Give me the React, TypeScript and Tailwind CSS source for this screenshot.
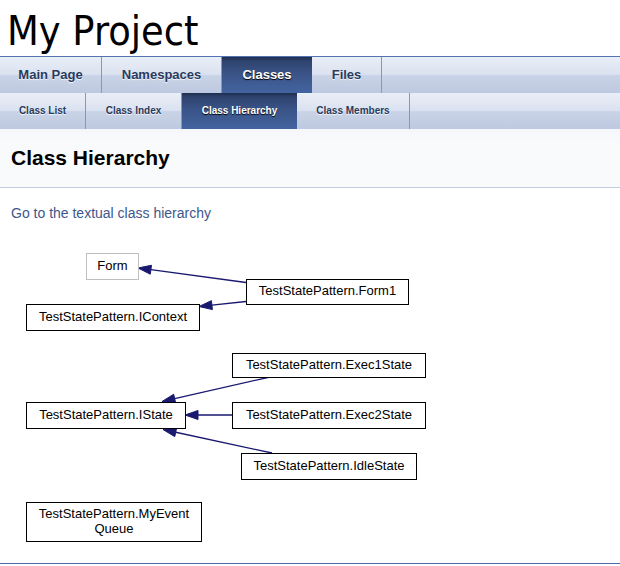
import React from "react";

const tabBg =
  "bg-[linear-gradient(to_bottom,#e9eef7_0%,#dbe2f0_48%,#c9d3e7_52%,#bdc9e1_100%)]";
const activeBg =
  "bg-[linear-gradient(to_bottom,#1f2e4f_0%,#2f446f_12%,#3a5387_45%,#4364a0_100%)]";

const mainTabs = [
  { label: "Main Page", w: "w-[102px]" },
  { label: "Namespaces", w: "w-[120px]" },
  { label: "Classes", w: "w-[90px]", active: true },
  { label: "Files", w: "w-[70px]" },
];

const subTabs = [
  { label: "Class List", w: "w-[86px]" },
  { label: "Class Index", w: "w-[96px]" },
  { label: "Class Hierarchy", w: "w-[115px]", active: true },
  { label: "Class Members", w: "w-[113px]" },
];

type Tab = { label: string; w: string; active?: boolean };

function TabRow({ tabs, small }: { tabs: Tab[]; small?: boolean }) {
  return (
    <ul className={`flex h-[36px] ${tabBg} ${small ? "text-[10px]" : "text-[13px]"}`}>
      {tabs.map((t) => (
        <li
          key={t.label}
          className={`${t.w} h-full text-center font-bold leading-[36px] ${
            t.active
              ? `${activeBg} text-white [text-shadow:0_1px_1px_rgba(0,0,0,1)]`
              : "border-r border-[#8397c6] text-[#283a5d] [text-shadow:0_1px_1px_rgba(255,255,255,0.9)]"
          }`}
        >
          {t.label}
        </li>
      ))}
    </ul>
  );
}

// graph nodes, coordinates inside the diagram canvas
const nodes = [
  { label: "Form", x: 86, y: 13, w: 53, h: 27, gray: true },
  { label: "TestStatePattern.Form1", x: 246, y: 39, w: 163, h: 26 },
  { label: "TestStatePattern.IContext", x: 26, y: 64, w: 174, h: 27 },
  { label: "TestStatePattern.Exec1State", x: 232, y: 113, w: 194, h: 25 },
  { label: "TestStatePattern.IState", x: 26, y: 162, w: 160, h: 27 },
  { label: "TestStatePattern.Exec2State", x: 232, y: 162, w: 194, h: 27 },
  { label: "TestStatePattern.IdleState", x: 241, y: 213, w: 176, h: 27 },
];

const edges: [number, number, number, number][] = [
  [246, 42.5, 138, 28],
  [246, 61.5, 199, 66.5],
  [270, 137, 162, 161.5],
  [232, 175, 185, 175],
  [272, 213, 163, 189.5],
];

function Edge({ e }: { e: [number, number, number, number] }) {
  const [x1, y1, x2, y2] = e;
  const dx = x2 - x1;
  const dy = y2 - y1;
  const len = Math.hypot(dx, dy);
  const ux = dx / len;
  const uy = dy / len;
  const L = 13;
  const W = 4.5;
  const bx = x2 - ux * L;
  const by = y2 - uy * L;
  const pts = `${x2},${y2} ${bx - uy * W},${by + ux * W} ${bx + uy * W},${by - ux * W}`;
  return (
    <g>
      <line x1={x1} y1={y1} x2={bx} y2={by} stroke="#191970" strokeWidth={1.3} />
      <polygon points={pts} fill="#191970" stroke="#191970" strokeWidth={1} />
    </g>
  );
}

export default function App() {
  return (
    <div className="min-h-screen bg-white font-['Liberation_Sans',Arial,sans-serif]">
      {/* title area */}
      <div className="h-[57px] border-b border-[#5373b4] pl-[7px] pt-[7px]">
        <div className="font-['DejaVu_Sans_Condensed','DejaVu_Sans',sans-serif] font-stretch-condensed text-[41px] leading-[48px] text-black">
          My Project
        </div>
      </div>

      <TabRow tabs={mainTabs} />
      <TabRow tabs={subTabs} small />

      {/* page header */}
      <div className="h-[59px] border-b border-[#c4cfe5] bg-[linear-gradient(to_bottom,#f4f6fa_0%,#f9fafc_20%,#f9fafc_100%)] pl-[11px] pt-[17px]">
        <h1 className="text-[21px] font-bold leading-[24px] text-black">Class Hierarchy</h1>
      </div>

      <div className="px-[11px] pt-[17px]">
        <a className="block text-[14px] leading-[16px] text-[#3d578c]">
          Go to the textual class hierarchy
        </a>
      </div>

      {/* inheritance graph */}
      <div className="relative mt-[19px] h-[323px]">
        <svg className="absolute inset-0" width="620" height="323">
          {edges.map((e, i) => (
            <Edge key={i} e={e} />
          ))}
        </svg>
        {nodes.map((n) => (
          <div
            key={n.label}
            className={`absolute flex items-center justify-center bg-white pb-[2px] text-[13px] text-black ${
              n.gray ? "border border-[#bfbfbf]" : "border border-black"
            }`}
            style={{ left: n.x, top: n.y, width: n.w, height: n.h }}
          >
            {n.label}
          </div>
        ))}
        <div className="absolute left-[26px] top-[262px] flex h-[40px] w-[176px] flex-col items-center justify-center border border-black pb-[2px] text-center text-[13px] leading-[15px] text-black">
          <span>TestStatePattern.MyEvent</span>
          <span>Queue</span>
        </div>
      </div>

      <div className="h-px bg-[#4a6aa5]" />
    </div>
  );
}
